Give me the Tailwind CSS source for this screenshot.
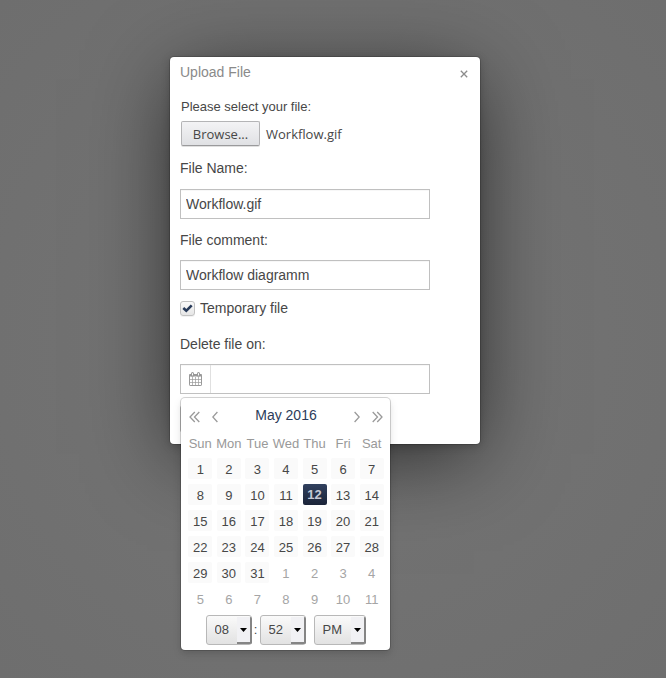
<!DOCTYPE html>
<html lang="en">
<head>
<meta charset="utf-8">
<meta name="viewport" content="width=device-width, initial-scale=1">
<title>Upload File</title>
<script src="https://cdn.jsdelivr.net/npm/@tailwindcss/browser@4"></script>
</head>
<body class="min-h-screen bg-[#707070] bg-[radial-gradient(circle_at_50%_50%,#757575,#6e6e6e)] font-['Liberation_Sans',Arial,sans-serif] text-sm leading-5 text-[#474747]">
<main class="flex min-h-screen items-start justify-center pt-[57px] pr-4">
  <section role="dialog" aria-labelledby="title" class="w-full max-w-[310px] rounded-[4px] bg-white px-[10px] pb-[11px] shadow-[0_2px_10px_0_rgba(0,0,0,0.2),0_16px_80px_-6px_rgba(0,0,0,0.65),0_0_0_1px_rgba(0,0,0,0.15)]">
    <header class="flex h-10 items-start justify-between pt-[5px]">
      <h1 id="title" class="text-[#8a8a8a]">Upload File</h1>
      <button type="button" aria-label="Close" class="mt-2 mr-[2px] text-[#8c8c8c]">
        <svg class="block size-2" viewBox="0 0 8 8" fill="none" stroke="currentColor" stroke-width="1.3"><path d="M.8.8 7.2 7.2M7.2.8.8 7.2"/></svg>
      </button>
    </header>

    <form>
      <p id="file-label" class="pl-px text-[13px]">Please select your file:</p>
      <div class="mt-1 flex h-[25px] items-center gap-[6px] pl-px font-['Open_Sans',sans-serif] text-[13px]">
        <button type="button" aria-describedby="file-label" class="h-[25px] w-[79px] rounded-[2px] border border-[#b4b4b6] border-b-[#9a9a9c] bg-linear-to-b from-[#f3f3f5] to-[#e0e1e4] shadow-[0_1px_0_rgba(0,0,0,0.12)]">Browse...</button>
        <span>Workflow.gif</span>
      </div>

      <label for="name" class="mt-3 block">File Name:</label>
      <input id="name" type="text" value="Workflow.gif" class="mt-[11px] block h-[30px] w-full max-w-[250px] border border-[#c0c0c0] bg-white px-[5px] shadow-[inset_0_1px_0_#f7f7f7]">

      <label for="comment" class="mt-[11px] block">File comment:</label>
      <input id="comment" type="text" value="Workflow diagramm" class="mt-[10px] block h-[30px] w-full max-w-[250px] border border-[#c0c0c0] bg-white px-[5px] shadow-[inset_0_1px_0_#f7f7f7]">

      <div class="mt-2 flex items-center gap-[5px]">
        <span class="relative block size-[15px]">
          <input id="temp" type="checkbox" checked class="block size-[15px] appearance-none rounded-[3px] border border-[#c2c2c2] bg-linear-to-b from-[#fafafa] to-[#e6e6e6] shadow-[0_1px_0_rgba(0,0,0,0.05)]">
          <svg class="pointer-events-none absolute inset-0 size-[15px]" viewBox="0 0 15 15" fill="none" stroke="#283a59" stroke-width="2.6"><path d="M3.3 7 6.3 9.8 11.7 4.4"/></svg>
        </span>
        <label for="temp">Temporary file</label>
      </div>

      <label for="date" class="mt-4 block">Delete file on:</label>
      <div class="relative mt-[10px] max-w-[250px]">
        <div class="flex h-[30px] border border-[#c0c0c0] shadow-[inset_0_1px_0_#f7f7f7]">
          <button type="button" aria-label="Open calendar" class="flex w-[30px] items-center justify-center border-r border-[#e0e0e0] text-[#999]">
            <svg class="h-[14px] w-[13px]" viewBox="0 0 13 14" fill="none" stroke="currentColor">
              <rect x=".5" y="2.5" width="12" height="11" rx=".6"/>
              <path d="M.5 2h12v2.5H.5z" fill="currentColor" stroke="none"/>
              <path d="M3.5 5v8M6.5 5v8M9.5 5v8M1 7.5h11M1 10.5h11" stroke-width=".7"/>
              <path d="M3.5 1.5v1.8M9.5 1.5v1.8" stroke-width="3" stroke-linecap="round"/>
              <path d="M3.5 1.2v2.2M9.5 1.2v2.2" stroke="#fff" stroke-width="1"/>
            </svg>
          </button>
          <input id="date" type="text" class="min-w-0 flex-1 px-[5px]">
        </div>

        <div role="group" aria-label="Calendar" class="absolute top-[34px] left-px w-[209px] rounded-[4px] bg-white pr-1 pb-[5px] pl-[5px] shadow-[0_4px_10px_0_rgba(0,0,0,0.1),0_3px_5px_0_rgba(0,0,0,0.05),0_0_0_1px_rgba(0,0,0,0.16)]">
          <div class="flex items-center justify-between px-[3px] pt-[7px] text-[#9a9a9a]">
            <div class="flex gap-3 pt-1">
              <button type="button" aria-label="Previous year"><svg class="block h-3 w-[11px]" viewBox="0 0 11 12" fill="none" stroke="currentColor" stroke-width="1.3"><path d="M5.8 1 1 6l4.8 5M10.3 1 5.5 6l4.8 5"/></svg></button>
              <button type="button" aria-label="Previous month"><svg class="block h-3 w-[6px]" viewBox="0 0 6 12" fill="none" stroke="currentColor" stroke-width="1.3"><path d="M5.4 1 .8 6l4.6 5"/></svg></button>
            </div>
            <h2 class="text-[#2c3c5a]">May 2016</h2>
            <div class="flex gap-3 pt-1">
              <button type="button" aria-label="Next month"><svg class="block h-3 w-[6px]" viewBox="0 0 6 12" fill="none" stroke="currentColor" stroke-width="1.3"><path d="M.6 1 5.2 6 .6 11"/></svg></button>
              <button type="button" aria-label="Next year"><svg class="block h-3 w-[11px]" viewBox="0 0 11 12" fill="none" stroke="currentColor" stroke-width="1.3"><path d="M5.2 1 10 6l-4.8 5M.7 1l4.8 5-4.8 5"/></svg></button>
            </div>
          </div>

          <table class="mt-2 w-full table-fixed text-[13px]">
            <thead><tr class="h-[22px] text-[#999]">
              <th class="font-normal">Sun</th><th class="font-normal">Mon</th><th class="font-normal">Tue</th><th class="font-normal"><span class="-mx-1">Wed</span></th><th class="font-normal">Thu</th><th class="font-normal">Fri</th><th class="font-normal">Sat</th>
            </tr></thead>
            <tbody id="days"></tbody>
          </table>

          <div class="mt-1 flex justify-center pr-px text-[13px]">
            <span class="relative block">
              <select aria-label="Hour" class="block h-[30px] w-[46px] appearance-none rounded-[3px] border border-[#b8b8b8] bg-linear-to-b from-[#fafafa] to-[#e2e2e2] pl-2"><option>08</option></select>
              <span class="pointer-events-none absolute top-[2px] right-0 bottom-px flex w-[15px] items-center justify-center rounded-r-[2px] border-r-2 border-b-2 border-[#858585] bg-[#f1f1f4]"><svg class="h-[4px] w-[7px]" viewBox="0 0 7 4"><path d="M0 0h7L3.5 4z"/></svg></span>
            </span>
            <span class="w-2 pt-[5px] text-center">:</span>
            <span class="relative block">
              <select aria-label="Minute" class="block h-[30px] w-[46px] appearance-none rounded-[3px] border border-[#b8b8b8] bg-linear-to-b from-[#fafafa] to-[#e2e2e2] pl-2"><option>52</option></select>
              <span class="pointer-events-none absolute top-[2px] right-0 bottom-px flex w-[15px] items-center justify-center rounded-r-[2px] border-r-2 border-b-2 border-[#858585] bg-[#f1f1f4]"><svg class="h-[4px] w-[7px]" viewBox="0 0 7 4"><path d="M0 0h7L3.5 4z"/></svg></span>
            </span>
            <span class="relative ml-2 block">
              <select aria-label="AM or PM" class="block h-[30px] w-[52px] appearance-none rounded-[3px] border border-[#b8b8b8] bg-linear-to-b from-[#fafafa] to-[#e2e2e2] pl-2"><option>PM</option></select>
              <span class="pointer-events-none absolute top-[2px] right-0 bottom-px flex w-[15px] items-center justify-center rounded-r-[2px] border-r-2 border-b-2 border-[#858585] bg-[#f1f1f4]"><svg class="h-[4px] w-[7px]" viewBox="0 0 7 4"><path d="M0 0h7L3.5 4z"/></svg></span>
            </span>
          </div>
        </div>
      </div>
      <button type="submit" aria-label="Upload" class="mt-[11px] block h-7 w-20 rounded-[3px] border border-[#c0c0c0] bg-[#f2f2f2]"></button>
    </form>
  </section>
</main>
<script>
  // Six weeks starting on Sunday, 1 May 2016; days past the 31st belong to June.
  const body = document.getElementById('days');
  for (let week = 0; week < 6; week++) {
    const row = body.insertRow();
    row.className = 'h-[26px]';
    for (let d = 1; d <= 7; d++) {
      const n = week * 7 + d;
      const cell = row.insertCell();
      const button = document.createElement('button');
      button.type = 'button';
      button.textContent = n > 31 ? n - 31 : n;
      button.className = n > 31
        ? 'mx-auto block h-[21px] w-6 pt-[3px] leading-[18px] text-[#a5a5a5]'
        : n === 12
          ? 'mx-auto block h-[21px] w-6 rounded-[2px] bg-linear-to-b from-[#31415f] to-[#1b2539] pt-px leading-[20px] font-bold text-[#c3c9d6]'
          : 'mx-auto block h-[21px] w-6 rounded-[2px] bg-[#fafafa] pt-[3px] leading-[18px]';
      cell.append(button);
    }
  }
</script>
</body>
</html>
